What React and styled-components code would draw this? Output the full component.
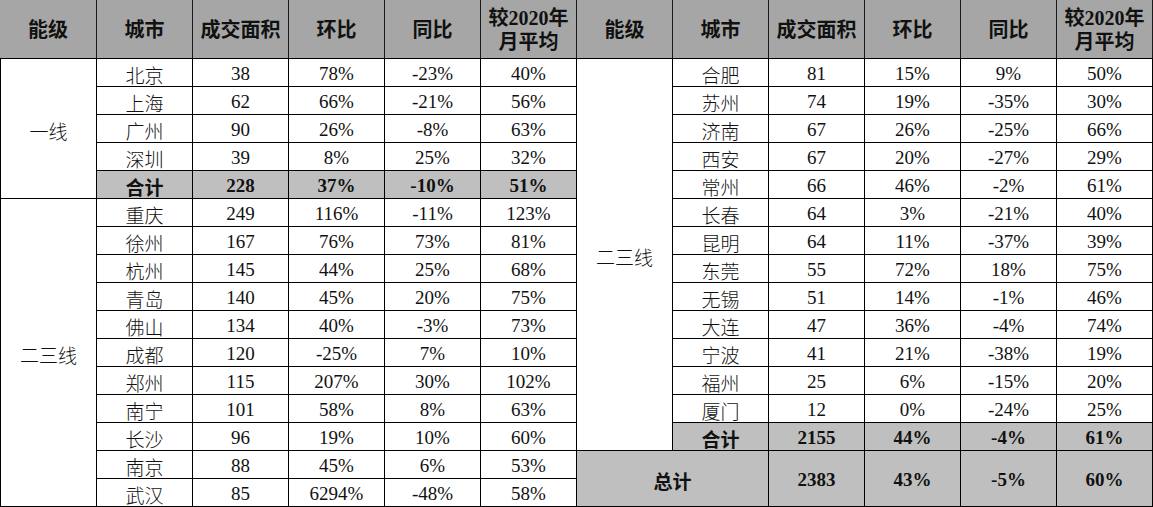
import React from "react";
import styled, { createGlobalStyle } from "styled-components";

const Global = createGlobalStyle`
  html, body { margin: 0; padding: 0; background: #ffffff; }
  body { font-family: "Liberation Serif", "Noto Sans CJK SC", serif; color: #111; }
`;

const Grid = styled.div`
  display: grid;
  grid-template-columns: 97px repeat(11, 96px);
  grid-template-rows: 59px repeat(16, 28px);
  width: 1153px;
  height: 507px;
  background: #fff;
`;

const HeadCell = styled.div`
  box-sizing: border-box;
  display: flex;
  align-items: center;
  justify-content: center;
  flex-direction: column;
  background: #a6a6a6;
  border-right: 1px solid #1a1a1a;
  border-bottom: 1px solid #000;
  font-size: 20px;
  font-weight: 700;
  line-height: 24px;
  padding-top: 2px;
  text-align: center;
  color: #111;
`;

const Cell = styled.div`
  box-sizing: border-box;
  display: flex;
  align-items: center;
  justify-content: center;
  border-right: 1px solid #000;
  border-bottom: 1px solid #000;
  border-left: ${(p) => (p.$first ? "1px solid #000" : "none")};
  background: ${(p) => (p.$gray ? "#bfbfbf" : "#fff")};
  font-size: 19px;
  font-weight: ${(p) => (p.$bold ? 700 : 300)};
  padding-top: 3px;
  grid-row: ${(p) => (p.$rows ? `span ${p.$rows}` : "auto")};
  grid-column: ${(p) => (p.$cols ? `span ${p.$cols}` : "auto")};
  white-space: nowrap;
`;

const headers = ["能级", "城市", "成交面积", "环比", "同比", null];

const left1 = [
  ["北京", "38", "78%", "-23%", "40%"],
  ["上海", "62", "66%", "-21%", "56%"],
  ["广州", "90", "26%", "-8%", "63%"],
  ["深圳", "39", "8%", "25%", "32%"],
];
const left1Sum = ["合计", "228", "37%", "-10%", "51%"];
const left2 = [
  ["重庆", "249", "116%", "-11%", "123%"],
  ["徐州", "167", "76%", "73%", "81%"],
  ["杭州", "145", "44%", "25%", "68%"],
  ["青岛", "140", "45%", "20%", "75%"],
  ["佛山", "134", "40%", "-3%", "73%"],
  ["成都", "120", "-25%", "7%", "10%"],
  ["郑州", "115", "207%", "30%", "102%"],
  ["南宁", "101", "58%", "8%", "63%"],
  ["长沙", "96", "19%", "10%", "60%"],
  ["南京", "88", "45%", "6%", "53%"],
  ["武汉", "85", "6294%", "-48%", "58%"],
];
const right = [
  ["合肥", "81", "15%", "9%", "50%"],
  ["苏州", "74", "19%", "-35%", "30%"],
  ["济南", "67", "26%", "-25%", "66%"],
  ["西安", "67", "20%", "-27%", "29%"],
  ["常州", "66", "46%", "-2%", "61%"],
  ["长春", "64", "3%", "-21%", "40%"],
  ["昆明", "64", "11%", "-37%", "39%"],
  ["东莞", "55", "72%", "18%", "75%"],
  ["无锡", "51", "14%", "-1%", "46%"],
  ["大连", "47", "36%", "-4%", "74%"],
  ["宁波", "41", "21%", "-38%", "19%"],
  ["福州", "25", "6%", "-15%", "20%"],
  ["厦门", "12", "0%", "-24%", "25%"],
];
const rightSum = ["合计", "2155", "44%", "-4%", "61%"];
const total = ["2383", "43%", "-5%", "60%"];

const Row = ({ data, gray, bold }) =>
  data.map((v, i) => (
    <Cell key={i} $gray={gray} $bold={bold}>
      {v}
    </Cell>
  ));

export default function App() {
  const leftRows = [
    ...left1.map((r) => ({ r })),
    { r: left1Sum, sum: true },
    ...left2.map((r) => ({ r })),
  ];
  const rightRows = [
    ...right.map((r) => ({ r })),
    { r: rightSum, sum: true },
    { total: true },
    { none: true },
  ];

  return (
    <>
      <Global />
      <Grid>
        {[0, 1].map((k) =>
          headers.map((h, i) => (
            <HeadCell key={`${k}-${i}`}>
              {h ?? (
                <>
                  <span>较2020年</span>
                  <span>月平均</span>
                </>
              )}
            </HeadCell>
          ))
        )}
        {leftRows.map((lr, idx) => (
          <React.Fragment key={idx}>
            {idx === 0 && (
              <Cell $first $rows={5}>
                一线
              </Cell>
            )}
            {idx === 5 && (
              <Cell $first $rows={11}>
                二三线
              </Cell>
            )}
            <Row data={lr.r} gray={lr.sum} bold={lr.sum} />
            {idx === 0 && <Cell $rows={14}>二三线</Cell>}
            {rightRows[idx].r && (
              <Row data={rightRows[idx].r} gray={rightRows[idx].sum} bold={rightRows[idx].sum} />
            )}
            {rightRows[idx].total && (
              <>
                <Cell $gray $bold $rows={2} $cols={2}>
                  总计
                </Cell>
                {total.map((v, i) => (
                  <Cell key={i} $gray $bold $rows={2}>
                    {v}
                  </Cell>
                ))}
              </>
            )}
          </React.Fragment>
        ))}
      </Grid>
    </>
  );
}
